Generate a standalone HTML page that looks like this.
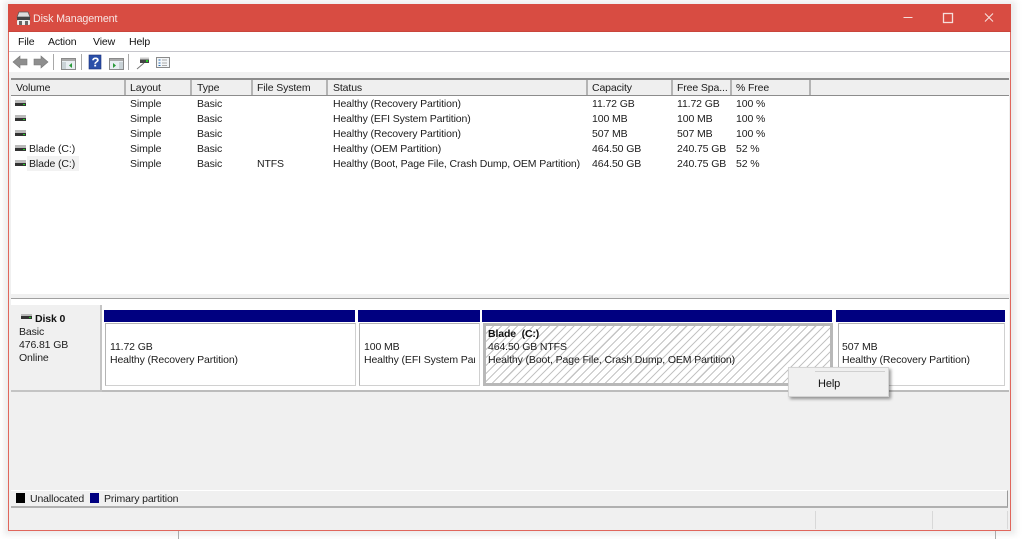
<!DOCTYPE html>
<html><head><meta charset="utf-8"><style>
html,body{margin:0;padding:0;width:1024px;height:539px;overflow:hidden;background:#fff;font-family:"Liberation Sans",sans-serif;font-size:10.5px;letter-spacing:-.12px;color:#1c1c1c}
div{position:absolute;box-sizing:border-box}
#w{left:0;top:0;width:1024px;height:539px;filter:blur(.35px);background:#fff;overflow:hidden}
.t{white-space:nowrap;line-height:14px;height:14px}
.hd{position:absolute;top:80px;height:15px;border-right:2px solid #b4b4b4;background:#efefef}
.bar{background:#000080;height:12px;top:310px}
.pb{background:#fff;top:323px;height:63px;border:1px solid #d0d0d0;border-top-color:#b4b4b4;border-left-color:#b4b4b4}
.sep{width:1px;background:#a8a8a8;top:54px;height:16px}
</style></head><body><div id="w">
<div style="left:4px;top:1px;width:1012px;height:534px;background:#ececec;filter:blur(3px)"></div>
<div style="left:8px;top:4px;width:1003px;height:527px;background:#f0f0f0;border:1px solid #e0665c;border-top:0"></div>
<div style="left:8px;top:4px;width:1003px;height:28px;background:#d84c42;border-bottom:1px solid #c9463c"></div>
<svg style="position:absolute;left:16px;top:11px" width="15" height="15" viewBox="0 0 15 15"><path d="M3 1h9l2 5H1z" fill="#ddd" stroke="#555" stroke-width=".7"/><rect x="1" y="6" width="13" height="3" fill="#444"/><rect x="1" y="9" width="13" height="5" rx="1" fill="#eee"/><rect x="3" y="10" width="3" height="4" fill="#666"/><rect x="9" y="10" width="3" height="4" fill="#666"/></svg>
<div class="t" style="left:33px;top:12px;color:#f8e6e4;font-size:10.7px">Disk Management</div>
<svg style="position:absolute;left:900px;top:10px" width="110" height="16" viewBox="0 0 110 16" fill="none" stroke="#f6dedb" stroke-width="1"><path d="M3.500 7.500h9"/><rect x="43.500" y="3.500" width="9" height="9" stroke-width="1.300"/><path d="M85 3.500l8 8M93 3.500l-8 8" stroke-width="1.100"/></svg>

<div style="left:9px;top:32px;width:1001px;height:20px;background:#fff;border-bottom:1px solid #c6c6cc"></div>
<div class="t" style="left:18px;top:35px;color:#111">File</div>
<div class="t" style="left:48px;top:35px;color:#111">Action</div>
<div class="t" style="left:93px;top:35px;color:#111">View</div>
<div class="t" style="left:129px;top:35px;color:#111">Help</div>

<div style="left:9px;top:52px;width:1001px;height:20px;background:#fff"></div>
<svg style="position:absolute;left:12px;top:54px" width="165" height="16" viewBox="0 0 165 16">
<path d="M1 8l7-6v3h7v6H8v3z" fill="#8e8e8e" stroke="#777" stroke-width=".6"/>
<path d="M36 8l-7-6v3h-7v6h7v3z" fill="#8e8e8e" stroke="#777" stroke-width=".6"/>
<rect x="49.500" y="4.500" width="14" height="11" fill="#e8eef2" stroke="#8a8a8a"/><rect x="50" y="5" width="13" height="2" fill="#a9a9a9"/><rect x="50" y="8" width="4" height="7" fill="#c9d2d6"/><path d="M60 9l-3 2.500 3 2.500z" fill="#2a9a3a"/>
<rect x="77" y="1" width="12" height="14" fill="#2a4fa8" stroke="#1b2f78" stroke-width=".6"/><text x="79.500" y="12.500" font-family="Liberation Sans" font-weight="bold" font-size="13" fill="#fff">?</text>
<rect x="97.500" y="4.500" width="14" height="11" fill="#e8eef2" stroke="#8a8a8a"/><rect x="98" y="5" width="13" height="2" fill="#a9a9a9"/><rect x="107" y="8" width="4" height="7" fill="#c9d2d6"/><path d="M101 9l3 2.500-3 2.500z" fill="#2a9a3a"/>
<path d="M125 15l7-6" stroke="#777" stroke-width="1"/><rect x="128" y="5" width="9" height="4" fill="#444"/><rect x="128" y="3.500" width="9" height="2" fill="#ccc"/><rect x="134" y="6" width="2" height="2" fill="#2c2"/>
<rect x="144.500" y="3.500" width="13" height="10" fill="#f4f6f8" stroke="#8a8a8a"/><path d="M146.500 6h2M146.500 9h2M146.500 11.500h2" stroke="#2a6fb0"/><path d="M150 6h5M150 9h5M150 11.500h5" stroke="#aaa"/>
</svg>
<div class="sep" style="left:53px"></div><div class="sep" style="left:81px"></div><div class="sep" style="left:128px"></div>

<div style="left:9px;top:72px;width:1001px;height:7px;background:#f1f1f1"></div>
<div style="left:11px;top:78px;width:998px;height:2px;background:#8c8c8c"></div>
<div style="left:11px;top:80px;width:998px;height:15px;background:#efefef"></div>
<div class="hd" style="left:11px;width:115px"></div><div class="hd" style="left:126px;width:66px"></div><div class="hd" style="left:192px;width:61px"></div><div class="hd" style="left:253px;width:75px"></div><div class="hd" style="left:328px;width:260px"></div><div class="hd" style="left:588px;width:85px"></div><div class="hd" style="left:673px;width:59px"></div><div class="hd" style="left:732px;width:79px"></div>
<div style="left:11px;top:95px;width:998px;height:1px;background:#8c8c8c"></div>
<div style="left:11px;top:96px;width:998px;height:198px;background:#fff"></div>

<div class="t" style="left:16px;top:81px">Volume</div><div class="t" style="left:130px;top:81px">Layout</div><div class="t" style="left:197px;top:81px">Type</div><div class="t" style="left:257px;top:81px">File System</div><div class="t" style="left:333px;top:81px">Status</div><div class="t" style="left:592px;top:81px">Capacity</div><div class="t" style="left:677px;top:81px">Free Spa...</div><div class="t" style="left:736px;top:81px">% Free</div>

<svg style="position:absolute;left:14px;top:98px" width="14" height="72" viewBox="0 0 14 72"><g><rect x="1" y="2" width="11" height="3" fill="#bbb"/><rect x="1" y="5" width="11" height="3" fill="#333"/><rect x="9" y="6" width="2" height="1" fill="#2c2"/></g><g transform="translate(0,15)"><rect x="1" y="2" width="11" height="3" fill="#bbb"/><rect x="1" y="5" width="11" height="3" fill="#333"/><rect x="9" y="6" width="2" height="1" fill="#2c2"/></g><g transform="translate(0,30)"><rect x="1" y="2" width="11" height="3" fill="#bbb"/><rect x="1" y="5" width="11" height="3" fill="#333"/><rect x="9" y="6" width="2" height="1" fill="#2c2"/></g><g transform="translate(0,45)"><rect x="1" y="2" width="11" height="3" fill="#bbb"/><rect x="1" y="5" width="11" height="3" fill="#333"/><rect x="9" y="6" width="2" height="1" fill="#2c2"/></g><g transform="translate(0,60)"><rect x="1" y="2" width="11" height="3" fill="#bbb"/><rect x="1" y="5" width="11" height="3" fill="#333"/><rect x="9" y="6" width="2" height="1" fill="#2c2"/></g></svg>
<div style="left:27px;top:156px;width:52px;height:15px;background:#f2f2f2"></div>

<div class="t" style="left:29px;top:142px">Blade (C:)</div><div class="t" style="left:29px;top:157px">Blade (C:)</div>

<div class="t" style="left:130px;top:97px">Simple</div><div class="t" style="left:197px;top:97px">Basic</div><div class="t" style="left:333px;top:97px">Healthy (Recovery Partition)</div><div class="t" style="left:592px;top:97px">11.72 GB</div><div class="t" style="left:677px;top:97px">11.72 GB</div><div class="t" style="left:736px;top:97px">100 %</div>
<div class="t" style="left:130px;top:112px">Simple</div><div class="t" style="left:197px;top:112px">Basic</div><div class="t" style="left:333px;top:112px">Healthy (EFI System Partition)</div><div class="t" style="left:592px;top:112px">100 MB</div><div class="t" style="left:677px;top:112px">100 MB</div><div class="t" style="left:736px;top:112px">100 %</div>
<div class="t" style="left:130px;top:127px">Simple</div><div class="t" style="left:197px;top:127px">Basic</div><div class="t" style="left:333px;top:127px">Healthy (Recovery Partition)</div><div class="t" style="left:592px;top:127px">507 MB</div><div class="t" style="left:677px;top:127px">507 MB</div><div class="t" style="left:736px;top:127px">100 %</div>
<div class="t" style="left:130px;top:142px">Simple</div><div class="t" style="left:197px;top:142px">Basic</div><div class="t" style="left:333px;top:142px">Healthy (OEM Partition)</div><div class="t" style="left:592px;top:142px">464.50 GB</div><div class="t" style="left:677px;top:142px">240.75 GB</div><div class="t" style="left:736px;top:142px">52 %</div>
<div class="t" style="left:130px;top:157px">Simple</div><div class="t" style="left:197px;top:157px">Basic</div><div class="t" style="left:257px;top:157px">NTFS</div><div class="t" style="left:333px;top:157px">Healthy (Boot, Page File, Crash Dump, OEM Partition)</div><div class="t" style="left:592px;top:157px">464.50 GB</div><div class="t" style="left:677px;top:157px">240.75 GB</div><div class="t" style="left:736px;top:157px">52 %</div>

<div style="left:11px;top:294px;width:998px;height:5px;background:#f0f0f0"></div>
<div style="left:11px;top:298px;width:998px;height:1px;background:#a0a0a0"></div>
<div style="left:11px;top:299px;width:998px;height:92px;background:#fff"></div>
<div style="left:11px;top:390px;width:998px;height:2px;background:#bcbcbc"></div>
<div style="left:11px;top:392px;width:998px;height:96px;background:#f0f0f0"></div>
<div style="left:11px;top:305px;width:91px;height:87px;background:#f0f0f0;border-right:2px solid #c4c4c4;border-bottom:2px solid #c4c4c4"></div>
<svg style="position:absolute;left:20px;top:313px" width="14" height="10"><rect x="1" y="1" width="11" height="2" fill="#bbb"/><rect x="1" y="3" width="11" height="3" fill="#333"/><rect x="9" y="4" width="2" height="1" fill="#2c2"/></svg>
<div class="t" style="left:35px;top:312px;font-weight:bold;color:#111">Disk 0</div>
<div class="t" style="left:19px;top:325px">Basic</div><div class="t" style="left:19px;top:338px">476.81 GB</div><div class="t" style="left:19px;top:351px">Online</div>

<div class="bar" style="left:104px;width:251px"></div><div class="bar" style="left:358px;width:122px"></div><div class="bar" style="left:482px;width:350px"></div><div class="bar" style="left:836px;width:169px"></div>
<div class="pb" style="left:105px;width:251px"></div><div class="pb" style="left:359px;width:121px"></div><div class="pb" style="left:838px;width:167px"></div>
<div style="left:483px;top:323px;width:350px;height:63px;border:3px solid #b8b8b8;background:repeating-linear-gradient(135deg,#fff 0,#fff 4.600px,#c4c4c4 4.600px,#c4c4c4 5.700px)"></div>

<div class="t" style="left:110px;top:340px">11.72 GB</div><div class="t" style="left:110px;top:353px">Healthy (Recovery Partition)</div>
<div class="t" style="left:364px;top:340px">100 MB</div><div class="t" style="left:364px;top:353px;width:111px;overflow:hidden">Healthy (EFI System Partition)</div>
<div class="t" style="left:488px;top:327px;font-weight:bold;color:#111">Blade&nbsp; (C:)</div><div class="t" style="left:488px;top:340px">464.50 GB NTFS</div><div class="t" style="left:488px;top:353px">Healthy (Boot, Page File, Crash Dump, OEM Partition)</div>
<div class="t" style="left:842px;top:340px">507 MB</div><div class="t" style="left:842px;top:353px">Healthy (Recovery Partition)</div>

<div style="left:788px;top:367px;width:101px;height:30px;background:#f0f0f0;border:1px solid #d4d4d4;box-shadow:2px 2px 3px rgba(0,0,0,.4)"></div>
<div style="left:815px;top:371px;width:70px;height:1px;background:#d0d0d0"></div>
<div class="t" style="left:818px;top:377px;color:#111;font-size:11px">Help</div>

<div style="left:11px;top:490px;width:997px;height:18px;background:#f0f0f0;border-top:1px solid #fff;border-right:1px solid #999;border-bottom:2px solid #b0b0b0"></div>
<div style="left:16px;top:493px;width:9px;height:10px;background:#000"></div>
<div class="t" style="left:30px;top:492px">Unallocated</div>
<div style="left:90px;top:493px;width:9px;height:10px;background:#000080"></div>
<div class="t" style="left:104px;top:492px">Primary partition</div>
<div style="left:815px;top:511px;width:1px;height:18px;background:#d8d8d8"></div>
<div style="left:932px;top:511px;width:1px;height:18px;background:#d8d8d8"></div>
<div style="left:1007px;top:511px;width:1px;height:18px;background:#d8d8d8"></div>
<div style="left:178px;top:531px;width:1px;height:8px;background:#aaa"></div>
<div style="left:995px;top:531px;width:1px;height:8px;background:#aaa"></div>
</div></body></html>
